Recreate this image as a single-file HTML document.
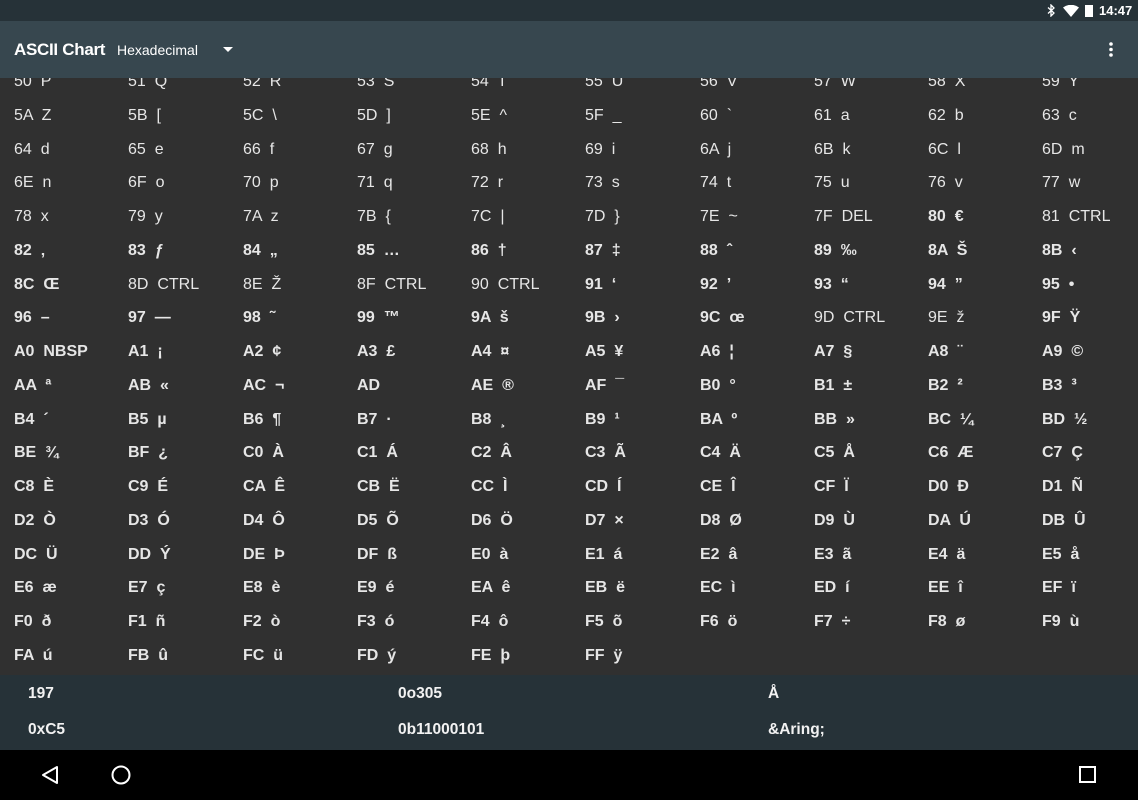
<!DOCTYPE html>
<html><head><meta charset="utf-8"><style>
*{margin:0;padding:0;box-sizing:border-box}
body{width:1138px;height:800px;overflow:hidden;background:#303030;font-family:"Liberation Sans",sans-serif;color:#e6e6e6;position:relative}
#grid{position:absolute;left:0;top:65px;width:1138px}
.r{height:33.75px;position:relative}
.r span{position:absolute;top:0;line-height:33.75px;font-size:16px;white-space:pre}
.b{font-weight:bold}
#sb{position:absolute;top:0;left:0;width:1138px;height:21px;background:#263238;z-index:2}
#tb{position:absolute;top:21px;left:0;width:1138px;height:57px;background:#37474f;z-index:2}
#bp{position:absolute;top:675px;left:0;width:1138px;height:75px;background:#263238;z-index:2}
#bp div{position:absolute;font-weight:bold;font-size:15.5px;color:#f2f2f2}
#nav{position:absolute;top:750px;left:0;width:1138px;height:50px;background:#000;z-index:2}
</style></head><body>
<div id="grid">
<div class="r"><span style="left:14px">50  P</span><span style="left:128px">51  Q</span><span style="left:243px">52  R</span><span style="left:357px">53  S</span><span style="left:471px">54  T</span><span style="left:585px">55  U</span><span style="left:700px">56  V</span><span style="left:814px">57  W</span><span style="left:928px">58  X</span><span style="left:1042px">59  Y</span></div>
<div class="r"><span style="left:14px">5A  Z</span><span style="left:128px">5B  [</span><span style="left:243px">5C  \</span><span style="left:357px">5D  ]</span><span style="left:471px">5E  ^</span><span style="left:585px">5F  _</span><span style="left:700px">60  `</span><span style="left:814px">61  a</span><span style="left:928px">62  b</span><span style="left:1042px">63  c</span></div>
<div class="r"><span style="left:14px">64  d</span><span style="left:128px">65  e</span><span style="left:243px">66  f</span><span style="left:357px">67  g</span><span style="left:471px">68  h</span><span style="left:585px">69  i</span><span style="left:700px">6A  j</span><span style="left:814px">6B  k</span><span style="left:928px">6C  l</span><span style="left:1042px">6D  m</span></div>
<div class="r"><span style="left:14px">6E  n</span><span style="left:128px">6F  o</span><span style="left:243px">70  p</span><span style="left:357px">71  q</span><span style="left:471px">72  r</span><span style="left:585px">73  s</span><span style="left:700px">74  t</span><span style="left:814px">75  u</span><span style="left:928px">76  v</span><span style="left:1042px">77  w</span></div>
<div class="r"><span style="left:14px">78  x</span><span style="left:128px">79  y</span><span style="left:243px">7A  z</span><span style="left:357px">7B  {</span><span style="left:471px">7C  |</span><span style="left:585px">7D  }</span><span style="left:700px">7E  ~</span><span style="left:814px">7F  DEL</span><span class="b" style="left:928px">80  €</span><span style="left:1042px">81  CTRL</span></div>
<div class="r b"><span style="left:14px">82  ‚</span><span style="left:128px">83  ƒ</span><span style="left:243px">84  „</span><span style="left:357px">85  …</span><span style="left:471px">86  †</span><span style="left:585px">87  ‡</span><span style="left:700px">88  ˆ</span><span style="left:814px">89  ‰</span><span style="left:928px">8A  Š</span><span style="left:1042px">8B  ‹</span></div>
<div class="r"><span class="b" style="left:14px">8C  Œ</span><span style="left:128px">8D  CTRL</span><span style="left:243px">8E  Ž</span><span style="left:357px">8F  CTRL</span><span style="left:471px">90  CTRL</span><span class="b" style="left:585px">91  ‘</span><span class="b" style="left:700px">92  ’</span><span class="b" style="left:814px">93  “</span><span class="b" style="left:928px">94  ”</span><span class="b" style="left:1042px">95  •</span></div>
<div class="r b"><span style="left:14px">96  –</span><span style="left:128px">97  —</span><span style="left:243px">98  ˜</span><span style="left:357px">99  ™</span><span style="left:471px">9A  š</span><span style="left:585px">9B  ›</span><span style="left:700px">9C  œ</span><span style="left:814px;font-weight:normal">9D  CTRL</span><span style="left:928px;font-weight:normal">9E  ž</span><span style="left:1042px">9F  Ÿ</span></div>
<div class="r b"><span style="left:14px">A0  NBSP</span><span style="left:128px">A1  ¡</span><span style="left:243px">A2  ¢</span><span style="left:357px">A3  £</span><span style="left:471px">A4  ¤</span><span style="left:585px">A5  ¥</span><span style="left:700px">A6  ¦</span><span style="left:814px">A7  §</span><span style="left:928px">A8  ¨</span><span style="left:1042px">A9  ©</span></div>
<div class="r b"><span style="left:14px">AA  ª</span><span style="left:128px">AB  «</span><span style="left:243px">AC  ¬</span><span style="left:357px">AD</span><span style="left:471px">AE  ®</span><span style="left:585px">AF  ¯</span><span style="left:700px">B0  °</span><span style="left:814px">B1  ±</span><span style="left:928px">B2  ²</span><span style="left:1042px">B3  ³</span></div>
<div class="r b"><span style="left:14px">B4  ´</span><span style="left:128px">B5  µ</span><span style="left:243px">B6  ¶</span><span style="left:357px">B7  ·</span><span style="left:471px">B8  ¸</span><span style="left:585px">B9  ¹</span><span style="left:700px">BA  º</span><span style="left:814px">BB  »</span><span style="left:928px">BC  ¼</span><span style="left:1042px">BD  ½</span></div>
<div class="r b"><span style="left:14px">BE  ¾</span><span style="left:128px">BF  ¿</span><span style="left:243px">C0  À</span><span style="left:357px">C1  Á</span><span style="left:471px">C2  Â</span><span style="left:585px">C3  Ã</span><span style="left:700px">C4  Ä</span><span style="left:814px">C5  Å</span><span style="left:928px">C6  Æ</span><span style="left:1042px">C7  Ç</span></div>
<div class="r b"><span style="left:14px">C8  È</span><span style="left:128px">C9  É</span><span style="left:243px">CA  Ê</span><span style="left:357px">CB  Ë</span><span style="left:471px">CC  Ì</span><span style="left:585px">CD  Í</span><span style="left:700px">CE  Î</span><span style="left:814px">CF  Ï</span><span style="left:928px">D0  Ð</span><span style="left:1042px">D1  Ñ</span></div>
<div class="r b"><span style="left:14px">D2  Ò</span><span style="left:128px">D3  Ó</span><span style="left:243px">D4  Ô</span><span style="left:357px">D5  Õ</span><span style="left:471px">D6  Ö</span><span style="left:585px">D7  ×</span><span style="left:700px">D8  Ø</span><span style="left:814px">D9  Ù</span><span style="left:928px">DA  Ú</span><span style="left:1042px">DB  Û</span></div>
<div class="r b"><span style="left:14px">DC  Ü</span><span style="left:128px">DD  Ý</span><span style="left:243px">DE  Þ</span><span style="left:357px">DF  ß</span><span style="left:471px">E0  à</span><span style="left:585px">E1  á</span><span style="left:700px">E2  â</span><span style="left:814px">E3  ã</span><span style="left:928px">E4  ä</span><span style="left:1042px">E5  å</span></div>
<div class="r b"><span style="left:14px">E6  æ</span><span style="left:128px">E7  ç</span><span style="left:243px">E8  è</span><span style="left:357px">E9  é</span><span style="left:471px">EA  ê</span><span style="left:585px">EB  ë</span><span style="left:700px">EC  ì</span><span style="left:814px">ED  í</span><span style="left:928px">EE  î</span><span style="left:1042px">EF  ï</span></div>
<div class="r b"><span style="left:14px">F0  ð</span><span style="left:128px">F1  ñ</span><span style="left:243px">F2  ò</span><span style="left:357px">F3  ó</span><span style="left:471px">F4  ô</span><span style="left:585px">F5  õ</span><span style="left:700px">F6  ö</span><span style="left:814px">F7  ÷</span><span style="left:928px">F8  ø</span><span style="left:1042px">F9  ù</span></div>
<div class="r b"><span style="left:14px">FA  ú</span><span style="left:128px">FB  û</span><span style="left:243px">FC  ü</span><span style="left:357px">FD  ý</span><span style="left:471px">FE  þ</span><span style="left:585px">FF  ÿ</span></div>
</div>
<div id="sb">
<svg style="position:absolute;left:1045px;top:4px" width="12" height="13" viewBox="0 0 12 13"><path d="M3 3.5l6 5.5-3 3V1l3 3-6 5.5" fill="none" stroke="#fff" stroke-width="1.3"/></svg>
<svg style="position:absolute;left:1063px;top:5px" width="16" height="12" viewBox="0 0 16 12"><path d="M0 2.5Q8-3 16 2.5L8 12z" fill="#fff"/></svg>
<div style="position:absolute;left:1085px;top:5px;width:8px;height:12px;background:#fff"></div>
<div style="position:absolute;left:1099px;top:3px;font-size:13px;color:#fff;font-weight:bold;line-height:16px">14:47</div>
</div>
<div id="tb">
<div style="position:absolute;left:14px;top:18px;font-size:17px;font-weight:bold;color:#fff;line-height:22px;letter-spacing:-0.3px">ASCII Chart</div>
<div style="position:absolute;left:117px;top:20px;font-size:14px;color:#fff;line-height:18px">Hexadecimal</div>
<svg style="position:absolute;left:223px;top:26px" width="10" height="5"><path d="M0 0h10L5 5z" fill="#fff"/></svg>
<svg style="position:absolute;left:1108px;top:20px" width="6" height="17"><circle cx="3" cy="3" r="1.8" fill="#fff"/><circle cx="3" cy="8.5" r="1.8" fill="#fff"/><circle cx="3" cy="14" r="1.8" fill="#fff"/></svg>
</div>
<div id="bp">
<div style="left:28px;top:10px">197</div><div style="left:398px;top:10px">0o305</div><div style="left:768px;top:10px">Å</div>
<div style="left:28px;top:46px">0xC5</div><div style="left:398px;top:46px">0b11000101</div><div style="left:768px;top:46px">&amp;Aring;</div>
</div>
<div id="nav">
<svg style="position:absolute;left:40px;top:15px" width="20" height="20"><path d="M17 2L3 10l14 8z" fill="none" stroke="#fff" stroke-width="2" stroke-linejoin="round"/></svg>
<svg style="position:absolute;left:110px;top:15px" width="22" height="22"><circle cx="11" cy="10" r="8.5" fill="none" stroke="#fff" stroke-width="2"/></svg>
<svg style="position:absolute;left:1078px;top:16px" width="20" height="20"><rect x="2" y="1" width="15" height="15" fill="none" stroke="#fff" stroke-width="2"/></svg>
</div>
</body></html>
